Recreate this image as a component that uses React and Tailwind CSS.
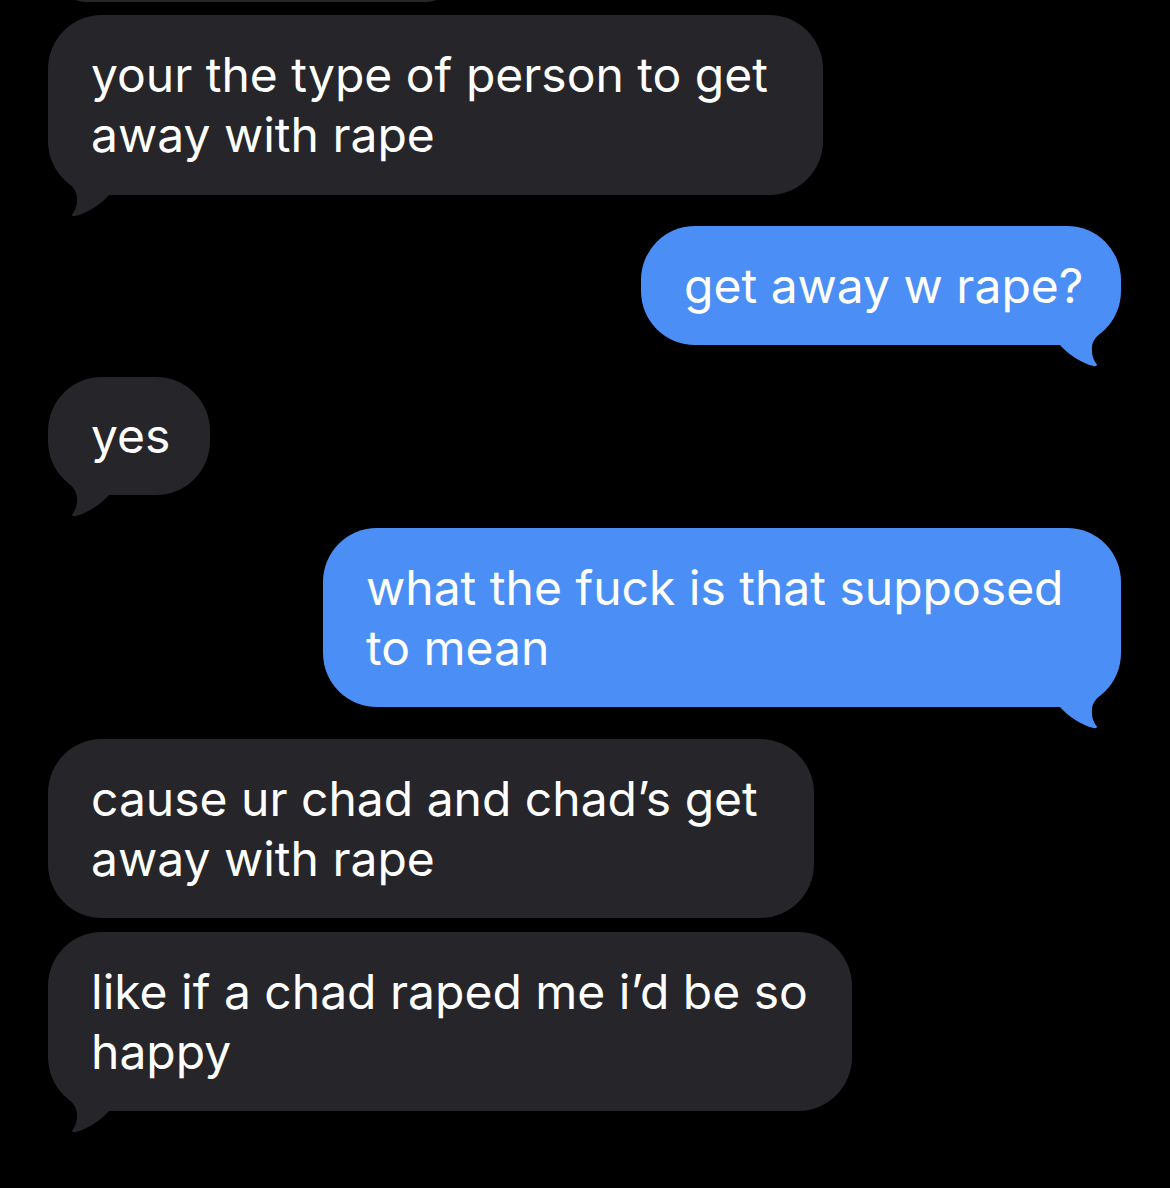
import React from "react";

const GREY = "#26262a";
const BLUE = "#4b8ff6";

const Tail = ({ color, side }) => (
    <svg
        viewBox="0 -30 64 52"
        className={side === "left" ? "absolute left-0 bottom-[-22px] w-[64px] h-[52px]" : "absolute right-0 bottom-[-22px] w-[64px] h-[52px] -scale-x-100"}
    >
        <path
            d="M8 -30 C14 -14 28 -10 29 2 C29.5 9 28 15 24 19.5 C24 21 25.5 21.5 27.5 21 C40 18 52 10 62 -1 L62 -30 Z"
            fill={color}
        />
    </svg>
);

const Bubble = ({ lines, from, tail, className }) => {
    const color = from === "me" ? BLUE : GREY;
    return (
        <div
            className={`relative flex flex-col justify-center pl-[43px] text-white text-[48px] leading-[60px] rounded-[54px] ${className}`}
            style={{ backgroundColor: color }}
        >
            {lines.map((l, i) => (
                <span key={i} className="block whitespace-nowrap">{l}</span>
            ))}
            {tail && <Tail color={color} side={from === "me" ? "right" : "left"} />}
        </div>
    );
};

export default function App() {
    return (
        <div
            className="w-[1170px] h-[1188px] bg-black overflow-hidden flex flex-col pl-[48px] pr-[49px]"
            style={{ fontFamily: "Inter, 'Noto Sans', sans-serif" }}
        >
            <div className="mt-[-58px] ml-[8px] w-[400px] h-[60px] rounded-[58px] bg-[#26262a] shrink-0" />
            <Bubble
                className="mt-[13px] w-[775px] h-[180px] shrink-0"
                lines={["your the type of person to get", "away with rape"]}
                tail
            />
            <Bubble
                from="me"
                className="mt-[31px] self-end w-[480px] h-[119px] shrink-0"
                lines={["get away w rape?"]}
                tail
            />
            <Bubble className="mt-[32px] w-[162px] h-[118px] shrink-0" lines={["yes"]} tail />
            <Bubble
                from="me"
                className="mt-[33px] self-end w-[798px] h-[179px] shrink-0"
                lines={["what the fuck is that supposed", "to mean"]}
                tail
            />
            <Bubble
                className="mt-[32px] w-[766px] h-[179px] shrink-0"
                lines={["cause ur chad and chad\u2019s get", "away with rape"]}
            />
            <Bubble
                className="mt-[14px] w-[804px] h-[179px] shrink-0"
                lines={["like if a chad raped me i\u2019d be so", "happy"]}
                tail
            />
        </div>
    );
}
